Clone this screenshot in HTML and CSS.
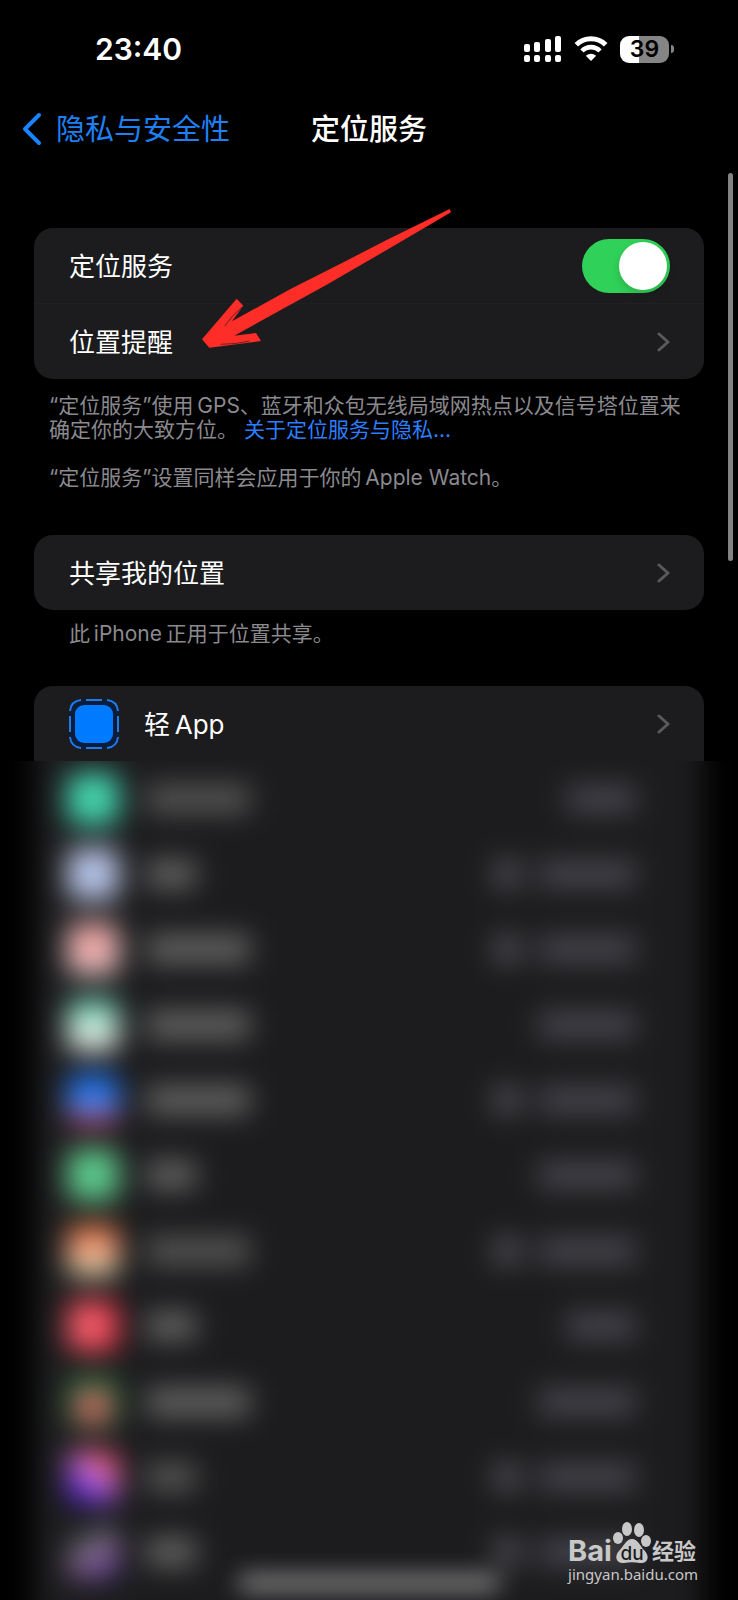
FILE: index.html
```
<!DOCTYPE html>
<html lang="zh-CN">

<head>
    <meta charset="UTF-8">
    <meta name="viewport" content="width=device-width, initial-scale=1.0">
    <title>定位服务</title>
    <link rel="stylesheet" href="styles.css">
</head>

<body>
    <header>
        <div class="status-bar">
            <time>23:40</time>
            <div class="status-icons">
                <svg class="signal" viewBox="0 0 38 26" fill="#fff">
                    <rect x="0" y="8" width="6" height="8" rx="2" />
                    <rect x="10" y="6" width="6" height="10" rx="2" />
                    <rect x="21" y="3" width="6" height="13" rx="2" />
                    <rect x="31" y="0" width="6" height="16" rx="2" />
                    <rect x="0" y="19" width="6" height="7" rx="2" />
                    <rect x="10" y="19" width="6" height="7" rx="2" />
                    <rect x="21" y="19" width="6" height="7" rx="2" />
                    <rect x="31" y="19" width="6" height="7" rx="2" />
                </svg>
                <svg class="wifi" viewBox="0 0 34 26">
                    <path d="M2.300 8.700A21 21 0 0 1 31.700 8.700" fill="none" stroke="#fff" stroke-width="5" />
                    <path d="M8 15A12.500 12.500 0 0 1 26 15" fill="none" stroke="#fff" stroke-width="4.600" />
                    <path d="M17 25L11.800 19.800Q17 15.600 22.200 19.800Z" fill="#fff" />
                </svg>
                <div class="battery">39</div>
            </div>
        </div>
        <nav class="nav-bar">
            <a class="back" href="#">
                <svg viewBox="0 0 20 34"><path d="M17 3L3 17L17 31" /></svg>
                <span>隐私与安全性</span>
            </a>
            <h1>定位服务</h1>
        </nav>
    </header>

    <main>
        <section class="card">
            <div class="row">
                <label for="location">定位服务</label>
                <input class="switch" type="checkbox" id="location" checked>
            </div>
            <a class="row" href="#">
                <span>位置提醒</span>
                <svg class="chevron" viewBox="0 0 13 20"><path d="M2 2L11 10L2 18" /></svg>
            </a>
            <svg class="arrow" viewBox="0 0 870 540">
                <path fill="#ff2d27" d="M809 57L813 67L620 180L440 284L163 437L228 429L243 453L88 473L66 448L170 326L190 347L156 394L330 298L480 222L620 150Z" />
                <path d="M188 350Q155 376 134 408M122 463Q170 463 208 453" fill="none" stroke="#1c1c1e" stroke-width="2" />
            </svg>
        </section>
        <div class="note">
            <p>“定位服务”使用&thinsp;GPS、蓝牙和众包无线局域网热点以及信号塔位置来确定你的大致方位。 <a href="#">关于定位服务与隐私...</a></p>
            <p>“定位服务”设置同样会应用于你的&thinsp;Apple Watch。</p>
        </div>

        <section class="card">
            <a class="row" href="#">
                <span>共享我的位置</span>
                <svg class="chevron" viewBox="0 0 13 20"><path d="M2 2L11 10L2 18" /></svg>
            </a>
        </section>
        <p class="note note-inset">此&thinsp;iPhone&thinsp;正用于位置共享。</p>

        <section class="card card-open">
            <a class="row" href="#">
                <svg class="clip-icon" viewBox="0 0 50 50">
                    <path fill="#0b1d3a" d="M13 0H37Q50 0 50 13V37Q50 50 37 50H13Q0 50 0 37V13Q0 0 13 0Z" />
                    <rect x="6" y="6" width="38" height="38" rx="9" fill="#007aff" />
                    <g fill="none" stroke="#1f7ae6" stroke-width="2">
                        <path d="M1 12Q2 2 12 1M17 1H33M38 1Q48 2 49 12M49 17V33M49 38Q48 48 38 49M33 49H17M12 49Q2 48 1 38M1 33V17" />
                    </g>
                </svg>
                <span>轻&thinsp;App</span>
                <svg class="chevron" viewBox="0 0 13 20"><path d="M2 2L11 10L2 18" /></svg>
            </a>
        </section>

        <section class="hidden-apps" aria-hidden="true">
            <ul class="app-list">
                <li><i class="icon teal"></i><b class="long faint"></b><em class="short"></em></li>
                <li><i class="icon sky"></i><b></b><u></u><em></em></li>
                <li><i class="icon pink"></i><b class="long"></b><u></u><em></em></li>
                <li><i class="icon mint"></i><b class="long"></b><em></em></li>
                <li><i class="icon blue"></i><b class="long"></b><u></u><em></em></li>
                <li><i class="icon green"></i><b></b><em></em></li>
                <li><i class="icon orange"></i><b class="long faint"></b><u></u><em></em></li>
                <li><i class="icon red"></i><b></b><em class="short"></em></li>
                <li><i class="icon forest"></i><b class="long"></b><em></em></li>
                <li><i class="icon purple"></i><b class="faint"></b><u></u><em></em></li>
                <li><i class="icon dusk"></i><b></b><u></u><em></em></li>
            </ul>
            <div class="home-indicator"></div>
        </section>
    </main>

    <div class="scrollbar"></div>

    <footer class="watermark">
        <div class="brand">
            <span class="bai">Bai</span>
            <svg class="paw" viewBox="0 0 38 42">
                <g fill="#c8c8c8">
                    <ellipse cx="5" cy="16" rx="5" ry="6" />
                    <ellipse cx="14" cy="7" rx="5" ry="7" />
                    <ellipse cx="26" cy="8" rx="5" ry="7" />
                    <ellipse cx="33" cy="19" rx="5" ry="6" />
                    <path d="M19 17C25 17 27 24 31 28C38 35 34 42 27 41C22 40 16 40 11 41C3 42 1 34 6 29C11 24 13 17 19 17Z" />
                </g>
                <text x="19" y="38" text-anchor="middle">du</text>
            </svg>
            <span class="jingyan">经验</span>
        </div>
        <div class="url">jingyan.baidu.com</div>
    </footer>
</body>

</html>
```
FILE: styles.css
```
* {
    box-sizing: border-box;
}

body {
    position: relative;
    display: flex;
    flex-direction: column;
    min-height: 100vh;
    margin: 0;
    background-color: #000;
    color: #fff;
    font-family: Inter, "Noto Sans CJK SC", sans-serif;
    font-size: 26px;
    overflow-x: hidden;
}

a {
    color: inherit;
    text-decoration: none;
}

p {
    margin: 0;
}

/* status bar and navigation */
.status-bar {
    display: flex;
    justify-content: space-between;
    align-items: center;
    height: 98px;
    padding: 0 64px 0 95px;
}

.status-bar time {
    font-size: 30px;
    font-weight: 600;
}

.status-icons {
    display: flex;
    align-items: center;
    gap: 12px;
}

.signal {
    width: 38px;
    height: 26px;
}

.wifi {
    width: 34px;
    height: 26px;
}

.battery {
    position: relative;
    width: 49px;
    height: 27px;
    margin-right: 5px;
    border-radius: 9px;
    background: linear-gradient(to right, #fff 39%, #858585 39%);
    color: #000;
    font-size: 23px;
    font-weight: 600;
    line-height: 27px;
    text-align: center;
}

.battery::after {
    content: "";
    position: absolute;
    top: 9px;
    right: -5px;
    width: 3px;
    height: 8px;
    border-radius: 0 4px 4px 0;
    background-color: #858585;
}

.nav-bar {
    display: grid;
    grid-template-columns: 1fr auto 1fr;
    align-items: center;
    height: 62px;
    padding: 0 22px;
}

.back {
    display: flex;
    align-items: center;
    gap: 14px;
    color: #1f80f5;
    font-size: 29px;
}

.back svg {
    width: 20px;
    height: 34px;
    fill: none;
    stroke: #1a84ff;
    stroke-width: 4;
    stroke-linecap: round;
    stroke-linejoin: round;
}

.back span,
h1 {
    padding-bottom: 4px;
}

h1 {
    margin: 0;
    font-size: 29px;
    font-weight: 500;
}

/* setting groups */
main {
    flex: 1;
    display: flex;
    flex-direction: column;
    padding-top: 68px;
}

.card {
    position: relative;
    margin: 0 34px;
    border-radius: 19px;
    background-color: #1c1c1e;
}

.card-open {
    border-radius: 19px 19px 0 0;
}

.row {
    display: flex;
    align-items: center;
    height: 75px;
    padding: 0 34px 0 35px;
}

.row + .row {
    height: 76px;
    border-top: 1px solid #202022;
}

.row label,
.row span {
    padding-bottom: 2px;
}

.chevron {
    width: 13px;
    height: 20px;
    margin-left: auto;
    fill: none;
    stroke: #5a5a5e;
    stroke-width: 3;
    stroke-linecap: round;
    stroke-linejoin: round;
}

.switch {
    appearance: none;
    display: flex;
    justify-content: flex-end;
    width: 88px;
    height: 54px;
    margin: 0 0 0 auto;
    padding: 3px;
    border-radius: 27px;
    background-color: #636366;
    cursor: pointer;
}

.switch::before {
    content: "";
    width: 48px;
    height: 48px;
    border-radius: 50%;
    background-color: #fff;
    box-shadow: 0 4px 8px rgba(0, 0, 0, 0.15);
}

.switch:checked {
    background-color: #30d158;
}

.switch:not(:checked) {
    justify-content: flex-start;
}

.arrow {
    position: absolute;
    top: -38px;
    left: 146px;
    width: 290px;
    height: 180px;
    pointer-events: none;
}

.note {
    padding: 15px 49px 45px;
    color: #8a8a8e;
    font-size: 21px;
    line-height: 24px;
}

.note p + p {
    margin-top: 24px;
}

.note a {
    color: #2b7fff;
}

.note-inset {
    padding: 12px 69px 40px;
}

.clip-icon {
    width: 50px;
    height: 50px;
    margin-right: 25px;
}

/* the rest of the list is blurred out */
.hidden-apps {
    position: relative;
    flex: 1;
    display: flex;
    overflow: hidden;
}

.app-list {
    flex: 1;
    display: flex;
    flex-direction: column;
    margin: -40px 34px;
    padding: 40px 0 50px;
    background-color: #1c1c1e;
    filter: blur(14px);
    list-style: none;
}

.app-list li {
    flex: 1;
    display: flex;
    align-items: center;
    min-height: 60px;
    padding: 0 68px 0 33px;
}

.app-list b {
    width: 50px;
    height: 28px;
    margin: 0 auto 0 27px;
    background-color: #646464;
}

.app-list .long {
    width: 104px;
}

.app-list .faint {
    background-color: #565656;
}

.app-list em {
    width: 98px;
    height: 28px;
    background-color: #45444b;
}

.app-list .short {
    width: 70px;
}

.app-list u {
    width: 26px;
    height: 28px;
    margin-right: 18px;
    background-color: #504f56;
}

.icon {
    width: 52px;
    height: 52px;
    border-radius: 10px;
}

.teal { background-color: #44d4ae; }
.sky { background: radial-gradient(#a6baf0, #ccd0dc); }
.pink { background: radial-gradient(circle at 50% 40%, #f88c8c, #e6d4d4 80%); }
.mint { background: linear-gradient(#54c4a0, #d0f0e4 55%, #f0e8e4); }
.blue { background: linear-gradient(#1c70e4 25%, #5088f4 65%, #c83850 90%); }
.green { background: radial-gradient(#48d088, #78c090); }
.orange { background: linear-gradient(#e06834, #f8b090 55%, #bcd0a8); }
.red { background: radial-gradient(circle at 40% 50%, #ff7c84, #e02c40 80%); }
.forest { background: radial-gradient(circle at 50% 60%, #e46464 25%, #287040 60%); }
.purple { background: linear-gradient(35deg, #4a20c4 20%, #b868e8 50%, #f06878 70%, #d03070); }
.dusk { background: linear-gradient(150deg, #1c1c1e 10%, #646870 40%, #906098 60%, #3c3094); }

.home-indicator {
    position: absolute;
    bottom: 11px;
    left: 50%;
    width: 262px;
    height: 12px;
    margin-left: -131px;
    border-radius: 6px;
    background-color: #b4b4b4;
    filter: blur(12px);
}

.scrollbar {
    position: absolute;
    top: 173px;
    right: 5px;
    width: 5px;
    height: 388px;
    border-radius: 3px;
    background-color: #828282;
}

.watermark {
    position: absolute;
    right: 40px;
    bottom: 16px;
    color: #c8c8c8;
}

.brand {
    display: flex;
    align-items: flex-end;
    height: 42px;
}

.bai {
    font-size: 29px;
    font-weight: 700;
    line-height: 30px;
    height: 28px;
}

.paw {
    width: 38px;
    height: 42px;
    margin: 0 1px;
}

.paw text {
    fill: #1c1c1e;
    font-size: 19px;
    font-weight: 500;
}

.jingyan {
    font-size: 22px;
    font-weight: 700;
    line-height: 26px;
}

.url {
    font-family: "Noto Sans", sans-serif;
    font-size: 15px;
    line-height: 20px;
}
```
